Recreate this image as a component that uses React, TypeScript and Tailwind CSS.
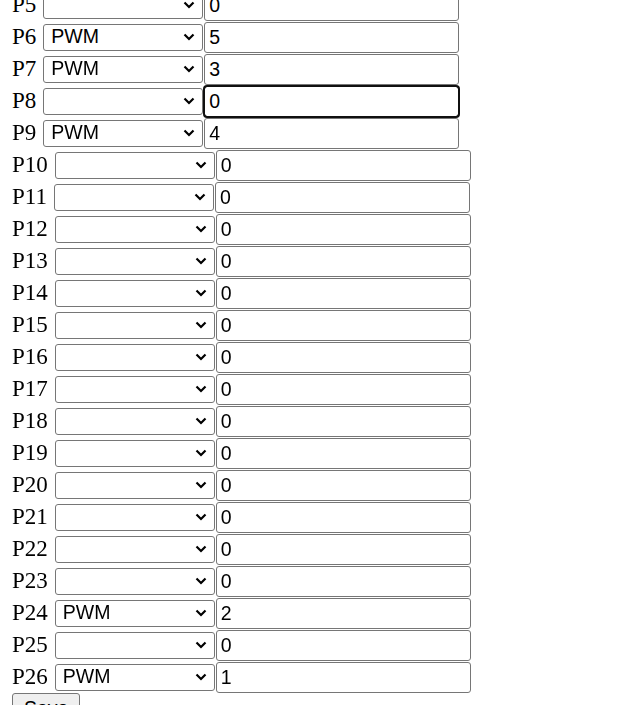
import React, { useEffect, useRef } from "react";

type Pin = { name: string; mode: string; value: string; focused?: boolean };

const pins: Pin[] = [
  { name: "P5", mode: "", value: "0" },
  { name: "P6", mode: "PWM", value: "5" },
  { name: "P7", mode: "PWM", value: "3" },
  { name: "P8", mode: "", value: "0", focused: true },
  { name: "P9", mode: "PWM", value: "4" },
  { name: "P10", mode: "", value: "0" },
  { name: "P11", mode: "", value: "0" },
  { name: "P12", mode: "", value: "0" },
  { name: "P13", mode: "", value: "0" },
  { name: "P14", mode: "", value: "0" },
  { name: "P15", mode: "", value: "0" },
  { name: "P16", mode: "", value: "0" },
  { name: "P17", mode: "", value: "0" },
  { name: "P18", mode: "", value: "0" },
  { name: "P19", mode: "", value: "0" },
  { name: "P20", mode: "", value: "0" },
  { name: "P21", mode: "", value: "0" },
  { name: "P22", mode: "", value: "0" },
  { name: "P23", mode: "", value: "0" },
  { name: "P24", mode: "PWM", value: "2" },
  { name: "P25", mode: "", value: "0" },
  { name: "P26", mode: "PWM", value: "1" },
];

const Chevron = () => (
  <svg
    width="12"
    height="8"
    viewBox="0 0 12 8"
    className="pointer-events-none absolute right-[8px] top-1/2 -translate-y-1/2"
  >
    <polyline points="1.5,1.5 6,6 10.5,1.5" fill="none" stroke="#000" strokeWidth="2.2" />
  </svg>
);

const PinRow: React.FC<{ pin: Pin }> = ({ pin }) => {
  const ref = useRef<HTMLInputElement>(null);

  useEffect(() => {
    if (pin.focused && ref.current) {
      ref.current.focus();
      const len = ref.current.value.length;
      ref.current.setSelectionRange(len, len);
    }
  }, [pin.focused]);

  return (
    <div className="flex h-8 items-center">
      <span className="mr-[7px] font-['Liberation_Serif',serif] text-[23px] leading-8 text-black">
        {pin.name}
      </span>
      <div className="relative">
        <select
          defaultValue={pin.mode}
          className="h-[27px] w-[160px] appearance-none rounded-[3px] border border-[#767676] bg-white pl-[7px] font-['Liberation_Sans',Arial,sans-serif] text-[19.5px] leading-none text-black"
        >
          <option value=""></option>
          <option value="PWM">PWM</option>
        </select>
        <Chevron />
      </div>
      <input
        ref={ref}
        type="text"
        defaultValue={pin.value}
        className={
          pin.focused
            ? "ml-px h-[31px] w-[255px] rounded-[3px] border border-[#101010] bg-white pl-[4px] font-['Liberation_Sans',Arial,sans-serif] text-[19.5px] text-black caret-black outline-2 -outline-offset-1 outline-[#101010]"
            : "ml-px h-[31px] w-[255px] rounded-[3px] border border-[#767676] bg-white pl-[4px] font-['Liberation_Sans',Arial,sans-serif] text-[19.5px] text-black outline-none"
        }
      />
    </div>
  );
};

export default function App() {
  return (
    <div className="min-h-screen bg-white">
      <form className="-mt-[11px] px-3" onSubmit={(e) => e.preventDefault()}>
        {pins.map((pin) => (
          <PinRow key={pin.name} pin={pin} />
        ))}
        <button
          type="submit"
          className="h-[31px] rounded-[3px] border border-[#767676] bg-[#efefef] px-[11px] font-['Liberation_Sans',Arial,sans-serif] text-[19.5px] text-black"
        >
          Save
        </button>
      </form>
    </div>
  );
}
